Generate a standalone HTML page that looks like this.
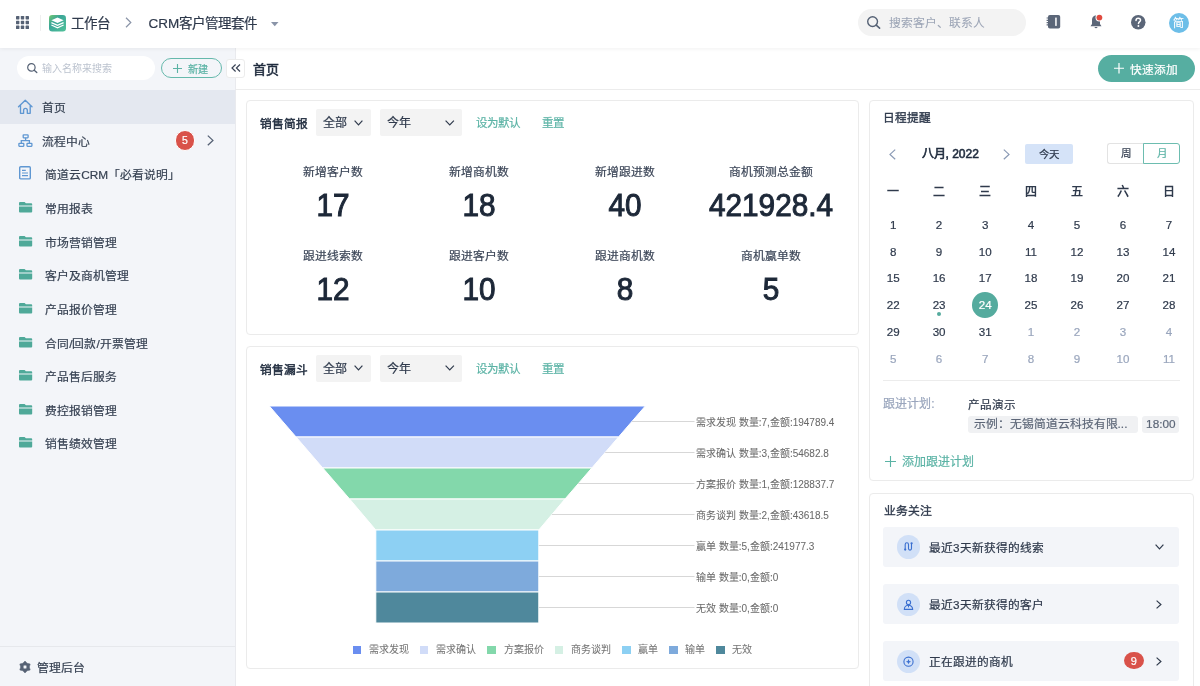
<!DOCTYPE html>
<html lang="zh-CN">
<head>
<meta charset="utf-8">
<style>
*{margin:0;padding:0;box-sizing:border-box;}
html,body{width:1200px;height:686px;overflow:hidden;background:#fff;}
body{will-change:transform;-webkit-text-stroke-width:0.2px;position:relative;font-family:"Liberation Sans",sans-serif;color:#2f3a4c;font-size:12px;}
.a{position:absolute;white-space:nowrap;}
.t{line-height:1;}
svg{position:absolute;overflow:visible;}
/* header */
#hdr{position:absolute;left:0;top:0;width:1200px;height:48px;background:#fff;z-index:3;box-shadow:0 1px 4px rgba(0,0,0,.06);}
#side{position:absolute;left:0;top:48px;width:236px;height:638px;background:#f3f5f9;border-right:1px solid #e9eaee;}
.hl{position:absolute;left:0;top:42px;width:235px;height:33.6px;background:#e4e8f0;}
.mi{position:absolute;font-size:11.8px;line-height:14px;color:#364152;}
.card{position:absolute;border:1px solid #ebebeb;border-radius:4px;background:#fff;}
.sel{position:absolute;background:#f3f3f3;border-radius:2px;height:27px;}
.teal{color:#5bb3a5;}
.lab{position:absolute;width:146px;text-align:center;font-size:11.8px;line-height:14px;color:#3b4557;}
.num{position:absolute;width:146px;text-align:center;font-size:30.5px;line-height:30px;font-weight:normal;color:#1d2838;-webkit-text-stroke:1px #1d2838;transform:scaleX(0.975);}
.wd{position:absolute;width:46px;text-align:center;font-size:12px;line-height:14px;font-weight:bold;color:#2f3a4c;-webkit-text-stroke-width:0;}
.dn{position:absolute;width:46px;text-align:center;font-size:11.6px;line-height:14px;color:#2f3a4c;}
.gr{color:#9aa6bd;}
.fl{position:absolute;font-size:10px;line-height:12px;color:#6a6a6a;-webkit-text-stroke-width:0.05px;}
.lg{position:absolute;width:8.5px;height:8.5px;}
.lt{position:absolute;font-size:10px;line-height:12px;color:#757575;-webkit-text-stroke-width:0.05px;}
.biz{position:absolute;left:14px;width:296px;height:40px;background:#f3f5f9;border-radius:3px;}
.bic{position:absolute;left:13.5px;top:8px;width:23.5px;height:23.5px;border-radius:50%;background:#d3e1f6;}
.btx{position:absolute;left:46px;top:13px;font-size:12px;line-height:14px;color:#2f3a4c;font-weight:500;}
</style>
</head>
<body>
<!-- HEADER -->
<div id="hdr">
  <svg style="left:16px;top:16px" width="13" height="13" viewBox="0 0 13 13" fill="#566275">
    <rect x="0" y="0" width="3.4" height="3.4" rx=".6"/><rect x="4.8" y="0" width="3.4" height="3.4" rx=".6"/><rect x="9.6" y="0" width="3.4" height="3.4" rx=".6"/>
    <rect x="0" y="4.8" width="3.4" height="3.4" rx=".6"/><rect x="4.8" y="4.8" width="3.4" height="3.4" rx=".6"/><rect x="9.6" y="4.8" width="3.4" height="3.4" rx=".6"/>
    <rect x="0" y="9.6" width="3.4" height="3.4" rx=".6"/><rect x="4.8" y="9.6" width="3.4" height="3.4" rx=".6"/><rect x="9.6" y="9.6" width="3.4" height="3.4" rx=".6"/>
  </svg>
  <div class="a" style="left:39.5px;top:14.5px;width:1px;height:16.5px;background:#efefef"></div>
  <svg style="left:49px;top:14.8px" width="17" height="16.4" viewBox="0 0 17 16.4">
    <defs><linearGradient id="lg1" x1="0" y1="0" x2="1" y2="1"><stop offset="0" stop-color="#74c96f"/><stop offset=".35" stop-color="#3aa597"/><stop offset="1" stop-color="#52c29a"/></linearGradient></defs>
    <rect x="0" y="0" width="17" height="16.4" rx="3.2" fill="url(#lg1)"/>
    <path d="M2.4 5.3 L8.5 2.6 L14.6 5.3 L8.5 8.1 Z" fill="#fff"/>
    <path d="M2.4 7.6 L8.5 10.4 L14.6 7.6" fill="none" stroke="#fff" stroke-width="1.3"/>
    <path d="M2.4 10 L8.5 12.8 L14.6 10" fill="none" stroke="#fff" stroke-width="1.3"/>
  </svg>
  <div class="a" style="left:70.7px;top:15.5px;font-size:13.5px;line-height:16px;color:#2f3a4c">工作台</div>
  <svg style="left:125px;top:17.3px" width="7" height="11" viewBox="0 0 7 11"><path d="M1 .8 L5.8 5.5 L1 10.2" fill="none" stroke="#8a94a8" stroke-width="1.2"/></svg>
  <div class="a" style="left:148.5px;top:15.5px;font-size:13.5px;line-height:16px;color:#2f3a4c">CRM客户管理套件</div>
  <svg style="left:271px;top:21.5px" width="8" height="5" viewBox="0 0 8 5"><path d="M0 0 L7.5 0 L3.75 4.3 Z" fill="#8a94a8"/></svg>
  <div class="a" style="left:858.3px;top:9.2px;width:168px;height:26.6px;border-radius:13.3px;background:#f3f3f3"></div>
  <svg style="left:866.5px;top:16.2px" width="14" height="13" viewBox="0 0 14 13"><circle cx="5.6" cy="5.6" r="4.9" fill="none" stroke="#566275" stroke-width="1.4"/><path d="M9.2 9.2 L12.6 12.2" stroke="#566275" stroke-width="1.6" stroke-linecap="round"/></svg>
  <div class="a" style="left:888.5px;top:16.3px;font-size:11.8px;line-height:15px;color:#9ca5b6;-webkit-text-stroke-width:0.05px">搜索客户、联系人</div>
  <!-- book -->
  <svg style="left:1045.5px;top:14.8px" width="15" height="14" viewBox="0 0 15 14">
    <rect x="2" y="0" width="12.2" height="13.5" rx="1.8" fill="#5b6678"/>
    <rect x="9.2" y="2.6" width="1.5" height="8.3" fill="#fff"/>
    <path d="M.6 3 h2.5 M.6 5.3 h2.5 M.6 7.6 h2.5 M.6 9.9 h2.5" stroke="#5b6678" stroke-width="1.2"/>
  </svg>
  <!-- bell -->
  <svg style="left:1089.5px;top:14px" width="14" height="16" viewBox="0 0 14 16">
    <path d="M6 1.6 C3 1.6 2 4 2 6.5 L2 10 L.5 12.2 L11.5 12.2 L10 10 L10 6.5 C10 4 9 1.6 6 1.6 Z" fill="#5b6678"/>
    <path d="M4.3 13 Q6 15.4 7.7 13 Z" fill="#5b6678"/>
    <circle cx="9.4" cy="3.6" r="3.9" fill="#fff"/>
    <circle cx="9.4" cy="3.6" r="2.9" fill="#e04a3f"/>
  </svg>
  <!-- help -->
  <svg style="left:1130.8px;top:15.3px" width="14.5" height="14.5" viewBox="0 0 14.5 14.5">
    <circle cx="7.25" cy="7.25" r="7.25" fill="#5b6678"/>
    <path d="M5 5.4 C5 3.9 6 3.2 7.25 3.2 C8.6 3.2 9.5 4 9.5 5.2 C9.5 6.6 7.5 6.8 7.5 8.6" fill="none" stroke="#fff" stroke-width="1.5" stroke-linecap="round"/>
    <circle cx="7.4" cy="11" r=".95" fill="#fff"/>
  </svg>
  <div class="a" style="left:1168.8px;top:12.7px;width:20.2px;height:20.2px;border-radius:50%;background:#6dbee8;color:#fff;font-size:11px;line-height:20px;text-align:center">简</div>
</div>

<!-- SIDEBAR -->
<div id="side">
  <div class="a" style="left:17px;top:8px;width:137.6px;height:24px;border-radius:12px;background:#fff"></div>
  <svg style="left:26.7px;top:15.4px" width="11" height="10" viewBox="0 0 11 10"><circle cx="4.4" cy="4.4" r="3.7" fill="none" stroke="#566275" stroke-width="1.2"/><path d="M7.2 7.2 L9.8 9.6" stroke="#566275" stroke-width="1.3" stroke-linecap="round"/></svg>
  <div class="a" style="left:42.3px;top:14.7px;font-size:10px;line-height:12px;color:#bcc3cf;-webkit-text-stroke-width:0">输入名称来搜索</div>
  <div class="a" style="left:161px;top:10.2px;width:61px;height:20px;border:1px solid #66b9ac;border-radius:10px"></div>
  <svg style="left:173.2px;top:16px" width="9" height="9" viewBox="0 0 9 9"><path d="M4.5 0 V9 M0 4.5 H9" stroke="#5bb3a5" stroke-width="1.1"/></svg>
  <div class="a teal" style="left:187.8px;top:15.5px;font-size:10.2px;line-height:12px">新建</div>

  <div class="hl"></div>
  <!-- home -->
  <svg style="left:17px;top:51px" width="16" height="16" viewBox="0 0 16 16"><path d="M1.5 7.8 L8.25 1.3 L15 7.8 M3.5 6 V14.3 H6.6 V11.25 A1.85 1.85 0 0 1 10.3 11.25 V14.3 H13.2 V6" fill="none" stroke="#5f97d2" stroke-width="1.35" stroke-linejoin="round" stroke-linecap="round"/></svg>
  <div class="mi" style="left:42.3px;top:53.3px">首页</div>
  <!-- flow -->
  <svg style="left:18px;top:86px" width="15" height="14" viewBox="0 0 15 14"><rect x="5.2" y=".8" width="4.9" height="3" rx=".5" fill="none" stroke="#5f97d2" stroke-width="1.3"/><rect x=".9" y="9.3" width="4.9" height="3" rx=".5" fill="none" stroke="#5f97d2" stroke-width="1.3"/><rect x="9" y="9.3" width="4.9" height="3" rx=".5" fill="none" stroke="#5f97d2" stroke-width="1.3"/><path d="M7.6 3.8 V6.6 M3.3 9.3 V6.6 H11.4 V9.3" fill="none" stroke="#5f97d2" stroke-width="1.3"/></svg>
  <div class="mi" style="left:42.3px;top:86.5px">流程中心</div>
  <div class="a" style="left:174.8px;top:82.4px;width:20.2px;height:20.2px;border-radius:50%;background:#d9524a;border:1px solid #fff;color:#fff;font-size:10.5px;line-height:19.5px;text-align:center">5</div>
  <svg style="left:207px;top:87px" width="7" height="11" viewBox="0 0 7 11"><path d="M.8 .6 L5.9 5.4 L.8 10.2" fill="none" stroke="#566275" stroke-width="1.3"/></svg>
  <!-- doc -->
  <svg style="left:19.2px;top:118.4px" width="12" height="14" viewBox="0 0 12 14"><rect x=".7" y=".7" width="10.6" height="12.2" rx="1" fill="none" stroke="#5f97d2" stroke-width="1.4"/><path d="M3 4.3 H6.8 M3 7 H9 M3 9.6 H9" stroke="#5f97d2" stroke-width="1.2"/></svg>
  <div class="mi" style="left:45.2px;top:119.5px">简道云CRM「必看说明」</div>
  <svg style="left:18.7px;top:154.2px" width="13.2" height="10.5" viewBox="0 0 13.2 10.5"><path d="M0 1 Q0 0 1 0 H5.6 L6.9 1.3 H12.2 Q13.2 1.3 13.2 2.3 V3.4 H0 Z M0 4.4 H13.2 V9.5 Q13.2 10.5 12.2 10.5 H1 Q0 10.5 0 9.5 Z" fill="#4fa999"/></svg>
  <div class="mi" style="left:45.2px;top:154.1px">常用报表</div>
  <svg style="left:18.7px;top:187.8px" width="13.2" height="10.5" viewBox="0 0 13.2 10.5"><path d="M0 1 Q0 0 1 0 H5.6 L6.9 1.3 H12.2 Q13.2 1.3 13.2 2.3 V3.4 H0 Z M0 4.4 H13.2 V9.5 Q13.2 10.5 12.2 10.5 H1 Q0 10.5 0 9.5 Z" fill="#4fa999"/></svg>
  <div class="mi" style="left:45.2px;top:187.7px">市场营销管理</div>
  <svg style="left:18.7px;top:221.4px" width="13.2" height="10.5" viewBox="0 0 13.2 10.5"><path d="M0 1 Q0 0 1 0 H5.6 L6.9 1.3 H12.2 Q13.2 1.3 13.2 2.3 V3.4 H0 Z M0 4.4 H13.2 V9.5 Q13.2 10.5 12.2 10.5 H1 Q0 10.5 0 9.5 Z" fill="#4fa999"/></svg>
  <div class="mi" style="left:45.2px;top:221.3px">客户及商机管理</div>
  <svg style="left:18.7px;top:255.0px" width="13.2" height="10.5" viewBox="0 0 13.2 10.5"><path d="M0 1 Q0 0 1 0 H5.6 L6.9 1.3 H12.2 Q13.2 1.3 13.2 2.3 V3.4 H0 Z M0 4.4 H13.2 V9.5 Q13.2 10.5 12.2 10.5 H1 Q0 10.5 0 9.5 Z" fill="#4fa999"/></svg>
  <div class="mi" style="left:45.2px;top:254.9px">产品报价管理</div>
  <svg style="left:18.7px;top:288.6px" width="13.2" height="10.5" viewBox="0 0 13.2 10.5"><path d="M0 1 Q0 0 1 0 H5.6 L6.9 1.3 H12.2 Q13.2 1.3 13.2 2.3 V3.4 H0 Z M0 4.4 H13.2 V9.5 Q13.2 10.5 12.2 10.5 H1 Q0 10.5 0 9.5 Z" fill="#4fa999"/></svg>
  <div class="mi" style="left:45.2px;top:288.5px">合同/回款/开票管理</div>
  <svg style="left:18.7px;top:322.2px" width="13.2" height="10.5" viewBox="0 0 13.2 10.5"><path d="M0 1 Q0 0 1 0 H5.6 L6.9 1.3 H12.2 Q13.2 1.3 13.2 2.3 V3.4 H0 Z M0 4.4 H13.2 V9.5 Q13.2 10.5 12.2 10.5 H1 Q0 10.5 0 9.5 Z" fill="#4fa999"/></svg>
  <div class="mi" style="left:45.2px;top:322.1px">产品售后服务</div>
  <svg style="left:18.7px;top:355.8px" width="13.2" height="10.5" viewBox="0 0 13.2 10.5"><path d="M0 1 Q0 0 1 0 H5.6 L6.9 1.3 H12.2 Q13.2 1.3 13.2 2.3 V3.4 H0 Z M0 4.4 H13.2 V9.5 Q13.2 10.5 12.2 10.5 H1 Q0 10.5 0 9.5 Z" fill="#4fa999"/></svg>
  <div class="mi" style="left:45.2px;top:355.7px">费控报销管理</div>
  <svg style="left:18.7px;top:389.4px" width="13.2" height="10.5" viewBox="0 0 13.2 10.5"><path d="M0 1 Q0 0 1 0 H5.6 L6.9 1.3 H12.2 Q13.2 1.3 13.2 2.3 V3.4 H0 Z M0 4.4 H13.2 V9.5 Q13.2 10.5 12.2 10.5 H1 Q0 10.5 0 9.5 Z" fill="#4fa999"/></svg>
  <div class="mi" style="left:45.2px;top:389.3px">销售绩效管理</div>
  <div class="a" style="left:0;top:597.5px;width:235px;height:1px;background:#e6e8ec"></div>
  <svg style="left:19.2px;top:613px" width="12" height="12" viewBox="0 0 12 12"><path fill="#566275" fill-rule="evenodd" stroke="#566275" stroke-width=".5" stroke-linejoin="round" d="M6.00 0.00 L8.15 2.28 L11.20 3.00 L10.30 6.00 L11.20 9.00 L8.15 9.72 L6.00 12.00 L3.85 9.72 L0.80 9.00 L1.70 6.00 L0.80 3.00 L3.85 2.28 Z M6 4.1 A1.9 1.9 0 1 0 6 7.9 A1.9 1.9 0 1 0 6 4.1 Z"/></svg>
  <div class="mi" style="left:37px;top:613px">管理后台</div>
</div>

<!-- MAIN -->
<div class="a" style="left:236px;top:89px;width:964px;height:1px;background:#ececec"></div>
<div class="a" style="left:226px;top:58.7px;width:19px;height:19px;background:#fff;border:1px solid #ececec;border-radius:3px;z-index:2"></div>
<svg style="left:231px;top:64px;z-index:2" width="10" height="8" viewBox="0 0 10 8"><path d="M4.6 .5 L1 4 L4.6 7.5 M9 .5 L5.4 4 L9 7.5" fill="none" stroke="#3a4456" stroke-width="1.2"/></svg>
<div class="a" style="left:253.3px;top:61.5px;font-size:13px;line-height:16px;-webkit-text-stroke:0.5px #1f2b3d;color:#1f2b3d">首页</div>
<div class="a" style="left:1098px;top:54.8px;width:97px;height:27.2px;border-radius:13.6px;background:#56aea1"></div>
<svg style="left:1114px;top:63.4px" width="10" height="10.5" viewBox="0 0 10 10.5"><path d="M5 0 V10.5 M0 5.25 H10" stroke="#fff" stroke-width="1.2"/></svg>
<div class="a" style="left:1130px;top:62.8px;font-size:11.7px;line-height:14px;color:#fff">快速添加</div>

<!-- CARD 1 -->
<div class="card" style="left:246px;top:100px;width:612.6px;height:235px"></div>
<div class="a" style="left:260.3px;top:117px;font-size:11.7px;line-height:14px;-webkit-text-stroke:0.45px #1f2b3d;color:#1f2b3d">销售简报</div>
<div class="sel" style="left:315.7px;top:109.4px;width:55.2px"></div>
<div class="a" style="left:322.5px;top:116.4px;font-size:12px;line-height:15px;color:#2f3a4c">全部</div>
<svg style="left:354px;top:119.7px" width="9" height="6" viewBox="0 0 9 6"><path d="M.6 .6 L4.5 4.8 L8.4 .6" fill="none" stroke="#2f3a4c" stroke-width="1.2"/></svg>
<div class="sel" style="left:379.5px;top:109.4px;width:82.2px"></div>
<div class="a" style="left:386.7px;top:116.4px;font-size:12px;line-height:15px;color:#2f3a4c">今年</div>
<svg style="left:444.8px;top:119.7px" width="9.5" height="6" viewBox="0 0 9.5 6"><path d="M.6 .6 L4.75 4.8 L8.9 .6" fill="none" stroke="#2f3a4c" stroke-width="1.2"/></svg>
<div class="a teal" style="left:476.4px;top:115.9px;font-size:11.5px;line-height:14px">设为默认</div>
<div class="a teal" style="left:542px;top:115.9px;font-size:11.5px;line-height:14px">重置</div>
<div class="lab" style="left:260px;top:165px">新增客户数</div>
<div class="num" style="left:260px;top:190.3px">17</div>
<div class="lab" style="left:406px;top:165px">新增商机数</div>
<div class="num" style="left:406px;top:190.3px">18</div>
<div class="lab" style="left:552px;top:165px">新增跟进数</div>
<div class="num" style="left:552px;top:190.3px">40</div>
<div class="lab" style="left:698px;top:165px">商机预测总金额</div>
<div class="num" style="left:698px;top:190.3px">421928.4</div>
<div class="lab" style="left:260px;top:249.3px">跟进线索数</div>
<div class="num" style="left:260px;top:274.3px">12</div>
<div class="lab" style="left:406px;top:249.3px">跟进客户数</div>
<div class="num" style="left:406px;top:274.3px">10</div>
<div class="lab" style="left:552px;top:249.3px">跟进商机数</div>
<div class="num" style="left:552px;top:274.3px">8</div>
<div class="lab" style="left:698px;top:249.3px">商机赢单数</div>
<div class="num" style="left:698px;top:274.3px">5</div>
<div class="card" style="left:246px;top:346px;width:612.6px;height:322.5px"></div>
<div class="a" style="left:260.3px;top:362.5px;font-size:11.7px;line-height:14px;-webkit-text-stroke:0.45px #1f2b3d;color:#1f2b3d">销售漏斗</div>
<div class="sel" style="left:315.7px;top:355px;width:55.2px"></div>
<div class="a" style="left:322.5px;top:362px;font-size:12px;line-height:15px;color:#2f3a4c">全部</div>
<svg style="left:354px;top:365.3px" width="9" height="6" viewBox="0 0 9 6"><path d="M.6 .6 L4.5 4.8 L8.4 .6" fill="none" stroke="#2f3a4c" stroke-width="1.2"/></svg>
<div class="sel" style="left:379.5px;top:355px;width:82.2px"></div>
<div class="a" style="left:386.7px;top:362px;font-size:12px;line-height:15px;color:#2f3a4c">今年</div>
<svg style="left:444.8px;top:365.3px" width="9.5" height="6" viewBox="0 0 9.5 6"><path d="M.6 .6 L4.75 4.8 L8.9 .6" fill="none" stroke="#2f3a4c" stroke-width="1.2"/></svg>
<div class="a teal" style="left:476.4px;top:361.5px;font-size:11.5px;line-height:14px">设为默认</div>
<div class="a teal" style="left:542px;top:361.5px;font-size:11.5px;line-height:14px">重置</div>
<svg style="left:0;top:0" width="1200" height="686" viewBox="0 0 1200 686">
<path d="M269.3 406 L645.3 406 L618.5 437 L296.1 437 Z" fill="#6a8ef0" stroke="#fff" stroke-width="1"/>
<path d="M631.9 421.5 H694.5" stroke="#d7d7d7" stroke-width="1"/>
<path d="M296.1 437 L618.5 437 L591.8 468 L322.8 468 Z" fill="#d1dcf8" stroke="#fff" stroke-width="1"/>
<path d="M605.2 452.5 H694.5" stroke="#d7d7d7" stroke-width="1"/>
<path d="M322.8 468 L591.8 468 L565.0 499 L349.6 499 Z" fill="#83d8ab" stroke="#fff" stroke-width="1"/>
<path d="M578.4 483.5 H694.5" stroke="#d7d7d7" stroke-width="1"/>
<path d="M349.6 499 L565.0 499 L538.8 530 L375.8 530 Z" fill="#d5f0e4" stroke="#fff" stroke-width="1"/>
<path d="M551.9 514.5 H694.5" stroke="#d7d7d7" stroke-width="1"/>
<path d="M375.8 530 L538.8 530 L538.8 561 L375.8 561 Z" fill="#8dd0f3" stroke="#fff" stroke-width="1"/>
<path d="M538.8 545.5 H694.5" stroke="#d7d7d7" stroke-width="1"/>
<path d="M375.8 561 L538.8 561 L538.8 592 L375.8 592 Z" fill="#7eaadc" stroke="#fff" stroke-width="1"/>
<path d="M538.8 576.5 H694.5" stroke="#d7d7d7" stroke-width="1"/>
<path d="M375.8 592 L538.8 592 L538.8 623 L375.8 623 Z" fill="#4f889c" stroke="#fff" stroke-width="1"/>
<path d="M538.8 607.5 H694.5" stroke="#d7d7d7" stroke-width="1"/>
</svg>
<div class="fl" style="left:696px;top:416.5px">需求发现 数量:7,金额:194789.4</div>
<div class="fl" style="left:696px;top:447.5px">需求确认 数量:3,金额:54682.8</div>
<div class="fl" style="left:696px;top:478.5px">方案报价 数量:1,金额:128837.7</div>
<div class="fl" style="left:696px;top:509.5px">商务谈判 数量:2,金额:43618.5</div>
<div class="fl" style="left:696px;top:540.5px">赢单 数量:5,金额:241977.3</div>
<div class="fl" style="left:696px;top:571.5px">输单 数量:0,金额:0</div>
<div class="fl" style="left:696px;top:602.5px">无效 数量:0,金额:0</div>
<div class="lg" style="left:352.5px;top:645.5px;background:#6a8ef0"></div>
<div class="lt" style="left:369px;top:643.5px">需求发现</div>
<div class="lg" style="left:419.8px;top:645.5px;background:#d1dcf8"></div>
<div class="lt" style="left:436.3px;top:643.5px">需求确认</div>
<div class="lg" style="left:487.2px;top:645.5px;background:#83d8ab"></div>
<div class="lt" style="left:503.7px;top:643.5px">方案报价</div>
<div class="lg" style="left:554.7px;top:645.5px;background:#d5f0e4"></div>
<div class="lt" style="left:570.8px;top:643.5px">商务谈判</div>
<div class="lg" style="left:622.1px;top:645.5px;background:#8dd0f3"></div>
<div class="lt" style="left:638.1px;top:643.5px">赢单</div>
<div class="lg" style="left:669.3px;top:645.5px;background:#7eaadc"></div>
<div class="lt" style="left:685.4px;top:643.5px">输单</div>
<div class="lg" style="left:716px;top:645.5px;background:#4f889c"></div>
<div class="lt" style="left:732.1px;top:643.5px">无效</div>
<div class="card" style="left:869px;top:100px;width:325px;height:381px"></div>
<div class="a" style="left:883.2px;top:111.3px;font-size:11.7px;line-height:14px;-webkit-text-stroke:0.35px #2f3a4c;color:#2f3a4c">日程提醒</div>
<svg style="left:889.4px;top:148.5px" width="7" height="11" viewBox="0 0 7 11"><path d="M6.2 .6 L1 5.4 L6.2 10.2" fill="none" stroke="#8a9ab5" stroke-width="1.2"/></svg>
<div class="a" style="left:921.5px;top:147px;font-size:12px;line-height:15px;-webkit-text-stroke:0.6px #1f2b3d;color:#1f2b3d">八月, 2022</div>
<svg style="left:1003px;top:148.5px" width="7" height="11" viewBox="0 0 7 11"><path d="M.8 .6 L6 5.4 L.8 10.2" fill="none" stroke="#8a9ab5" stroke-width="1.2"/></svg>
<div class="a" style="left:1024.7px;top:143.5px;width:48.5px;height:20.2px;border-radius:2px;background:#d5e3f8;font-size:10.5px;line-height:20px;text-align:center;color:#2f3a4c">今天</div>
<div class="a" style="left:1106.5px;top:143.2px;width:37px;height:20.5px;border:1px solid #e3e3e3;border-right:none;border-radius:3px 0 0 3px;font-size:10.5px;line-height:18.5px;text-align:center;color:#2f3a4c">周</div>
<div class="a" style="left:1143px;top:143.2px;width:37px;height:20.5px;border:1px solid #6dbdb0;border-radius:0 3px 3px 0;font-size:10.5px;line-height:18.5px;text-align:center;color:#5bb3a5">月</div>
<div class="wd" style="left:870.3px;top:185px">一</div>
<div class="wd" style="left:916.1px;top:185px">二</div>
<div class="wd" style="left:962.2px;top:185px">三</div>
<div class="wd" style="left:1008.0px;top:185px">四</div>
<div class="wd" style="left:1054.0px;top:185px">五</div>
<div class="wd" style="left:1100.0px;top:185px">六</div>
<div class="wd" style="left:1146.0px;top:185px">日</div>
<div class="dn" style="left:870.3px;top:217.6px">1</div>
<div class="dn" style="left:916.1px;top:217.6px">2</div>
<div class="dn" style="left:962.2px;top:217.6px">3</div>
<div class="dn" style="left:1008.0px;top:217.6px">4</div>
<div class="dn" style="left:1054.0px;top:217.6px">5</div>
<div class="dn" style="left:1100.0px;top:217.6px">6</div>
<div class="dn" style="left:1146.0px;top:217.6px">7</div>
<div class="dn" style="left:870.3px;top:244.5px">8</div>
<div class="dn" style="left:916.1px;top:244.5px">9</div>
<div class="dn" style="left:962.2px;top:244.5px">10</div>
<div class="dn" style="left:1008.0px;top:244.5px">11</div>
<div class="dn" style="left:1054.0px;top:244.5px">12</div>
<div class="dn" style="left:1100.0px;top:244.5px">13</div>
<div class="dn" style="left:1146.0px;top:244.5px">14</div>
<div class="dn" style="left:870.3px;top:271.4px">15</div>
<div class="dn" style="left:916.1px;top:271.4px">16</div>
<div class="dn" style="left:962.2px;top:271.4px">17</div>
<div class="dn" style="left:1008.0px;top:271.4px">18</div>
<div class="dn" style="left:1054.0px;top:271.4px">19</div>
<div class="dn" style="left:1100.0px;top:271.4px">20</div>
<div class="dn" style="left:1146.0px;top:271.4px">21</div>
<div class="dn" style="left:870.3px;top:298.3px">22</div>
<div class="dn" style="left:916.1px;top:298.3px">23</div>
<div class="a" style="left:972.4px;top:292.4px;width:25.7px;height:25.7px;border-radius:50%;background:#55ab9e"></div>
<div class="dn" style="left:962.2px;top:298.3px;color:#fff">24</div>
<div class="dn" style="left:1008.0px;top:298.3px">25</div>
<div class="dn" style="left:1054.0px;top:298.3px">26</div>
<div class="dn" style="left:1100.0px;top:298.3px">27</div>
<div class="dn" style="left:1146.0px;top:298.3px">28</div>
<div class="dn" style="left:870.3px;top:325.2px">29</div>
<div class="dn" style="left:916.1px;top:325.2px">30</div>
<div class="dn" style="left:962.2px;top:325.2px">31</div>
<div class="dn gr" style="left:1008.0px;top:325.2px">1</div>
<div class="dn gr" style="left:1054.0px;top:325.2px">2</div>
<div class="dn gr" style="left:1100.0px;top:325.2px">3</div>
<div class="dn gr" style="left:1146.0px;top:325.2px">4</div>
<div class="dn gr" style="left:870.3px;top:352.1px">5</div>
<div class="dn gr" style="left:916.1px;top:352.1px">6</div>
<div class="dn gr" style="left:962.2px;top:352.1px">7</div>
<div class="dn gr" style="left:1008.0px;top:352.1px">8</div>
<div class="dn gr" style="left:1054.0px;top:352.1px">9</div>
<div class="dn gr" style="left:1100.0px;top:352.1px">10</div>
<div class="dn gr" style="left:1146.0px;top:352.1px">11</div>
<div class="a" style="left:937px;top:312.4px;width:4px;height:4px;border-radius:50%;background:#55ab9e"></div>
<div class="a" style="left:883.2px;top:380px;width:297px;height:1px;background:#ececec"></div>
<div class="a" style="left:883.2px;top:397.3px;font-size:12px;line-height:14px;color:#9aa6bd">跟进计划:</div>
<div class="a" style="left:967.6px;top:397.6px;font-size:11.6px;line-height:14px;color:#2f3a4c;-webkit-text-stroke:0.2px #2f3a4c">产品演示</div>
<div class="a" style="left:967.6px;top:416.2px;width:170.6px;height:16.4px;border-radius:3px;background:#f0f1f3;font-size:11.8px;line-height:17.5px;color:#5d6778;padding-left:6px">示例：无锡简道云科技有限...</div>
<div class="a" style="left:1142.3px;top:416.2px;width:37.1px;height:16.4px;border-radius:3px;background:#f0f1f3;font-size:11.8px;line-height:17.5px;color:#5d6778;text-align:center">18:00</div>
<svg style="left:885px;top:455.5px" width="11" height="11" viewBox="0 0 11 11"><path d="M5.5 0 V11 M0 5.5 H11" stroke="#5bb3a5" stroke-width="1.1"/></svg>
<div class="a teal" style="left:901.6px;top:454.5px;font-size:12px;line-height:14px">添加跟进计划</div>
<div class="card" style="left:869px;top:492.5px;width:325px;height:220px"></div>
<div class="a" style="left:883.5px;top:504px;font-size:11.8px;line-height:14px;-webkit-text-stroke:0.35px #2f3a4c;color:#2f3a4c">业务关注</div>
<div class="a" style="left:883.2px;top:526.9px;width:296.3px;height:39.9px;background:#f3f5f9;border-radius:3px"></div>
<div class="a" style="left:896.8px;top:535.3px;width:23.4px;height:23.4px;border-radius:50%;background:#d1e0f7"></div>
<svg style="left:896.8px;top:535.3px" width="23.4" height="23.4" viewBox="0 0 23.4 23.4"><path d="M8.2 14.4 V9.4 A1.65 1.65 0 0 1 11.5 9.4 V13.6 A1.5 1.5 0 0 0 14.5 13.6 V8.6" fill="none" stroke="#3a6fd0" stroke-width="1.1"/><circle cx="8.2" cy="14.6" r="1.15" fill="#3a6fd0"/><circle cx="14.6" cy="8.3" r="1.15" fill="#3a6fd0"/></svg>
<div class="a" style="left:929.1px;top:540.6999999999999px;font-size:11.7px;line-height:14px;-webkit-text-stroke:0.22px #2f3a4c;color:#2f3a4c">最近3天新获得的线索</div>
<div class="a" style="left:883.2px;top:584.1px;width:296.3px;height:39.9px;background:#f3f5f9;border-radius:3px"></div>
<div class="a" style="left:896.8px;top:592.5px;width:23.4px;height:23.4px;border-radius:50%;background:#d1e0f7"></div>
<svg style="left:896.8px;top:592.5px" width="23.4" height="23.4" viewBox="0 0 23.4 23.4"><circle cx="11.5" cy="9.4" r="2.1" fill="none" stroke="#3a6fd0" stroke-width="1.1"/><path d="M7.3 16.4 A4.2 4.2 0 0 1 15.7 16.4 Z" fill="none" stroke="#3a6fd0" stroke-width="1.1" stroke-linejoin="round"/><path d="M11.5 11.6 V14.4" stroke="#3a6fd0" stroke-width="1"/></svg>
<div class="a" style="left:929.1px;top:597.9px;font-size:11.7px;line-height:14px;-webkit-text-stroke:0.22px #2f3a4c;color:#2f3a4c">最近3天新获得的客户</div>
<div class="a" style="left:883.2px;top:641.4px;width:296.3px;height:39.9px;background:#f3f5f9;border-radius:3px"></div>
<div class="a" style="left:896.8px;top:649.8px;width:23.4px;height:23.4px;border-radius:50%;background:#d1e0f7"></div>
<svg style="left:896.8px;top:649.8px" width="23.4" height="23.4" viewBox="0 0 23.4 23.4"><circle cx="11.5" cy="11.7" r="4.6" fill="none" stroke="#3a6fd0" stroke-width="1.1"/><path d="M11.5 9.1 L12.3 10.9 L14.1 11.7 L12.3 12.5 L11.5 14.3 L10.7 12.5 L8.9 11.7 L10.7 10.9 Z" fill="#3a6fd0"/></svg>
<div class="a" style="left:929.1px;top:655.1999999999999px;font-size:11.7px;line-height:14px;-webkit-text-stroke:0.22px #2f3a4c;color:#2f3a4c">正在跟进的商机</div>
<svg style="left:1154.5px;top:544.2px" width="9" height="6" viewBox="0 0 9 6"><path d="M.6 .6 L4.5 4.8 L8.4 .6" fill="none" stroke="#2f3a4c" stroke-width="1.2"/></svg>
<svg style="left:1156.2px;top:600.3px" width="6" height="9" viewBox="0 0 6 9"><path d="M.6 .6 L4.9 4.5 L.6 8.4" fill="none" stroke="#2f3a4c" stroke-width="1.2"/></svg>
<svg style="left:1156.2px;top:656.8px" width="6" height="9" viewBox="0 0 6 9"><path d="M.6 .6 L4.9 4.5 L.6 8.4" fill="none" stroke="#2f3a4c" stroke-width="1.2"/></svg>
<div class="a" style="left:1124px;top:652px;width:19.8px;height:17.3px;border-radius:50%;background:#d9524a;color:#fff;font-size:11px;line-height:19px;text-align:center">9</div>
</body>
</html>
